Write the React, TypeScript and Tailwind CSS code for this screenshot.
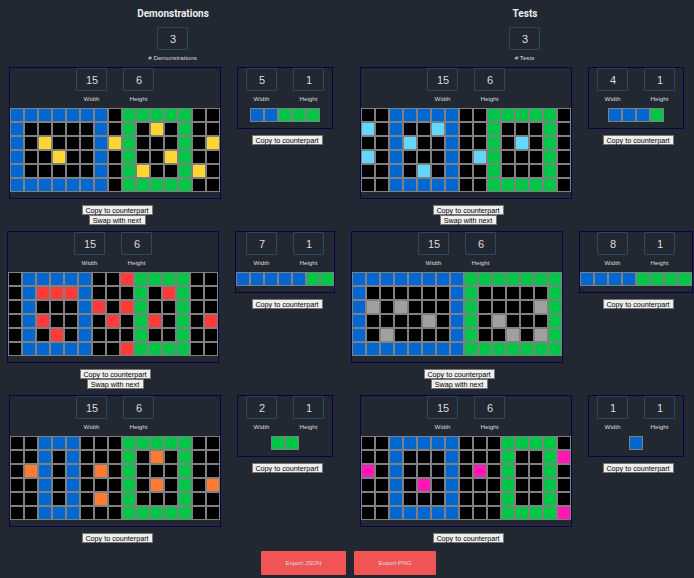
const COLORS: Record<string, string> = {
  k: "bg-black",
  b: "bg-[#0168d2]",
  g: "bg-[#00c748]",
  y: "bg-[#ffd532]",
  c: "bg-[#63d7fd]",
  r: "bg-[#ff3b39]",
  x: "bg-[#a0a0a0]",
  o: "bg-[#ff7b31]",
  p: "bg-[#ff18b4]",
};

type Pair = { input: string[]; output: string[] };

const demos: Pair[] = [
  {
    input: [
      "bbbbbbbkgggggkk",
      "bkkkkkbkgkykgkk",
      "bkykkkbygkkkgky",
      "bkkykkbkgkkygkk",
      "bkkkkkbkgykkgyk",
      "bbbbbbbkgggggkk",
    ],
    output: ["bbggg"],
  },
  {
    input: [
      "kbbbbbkkrggggkk",
      "kbrrrbkkkgkrgkk",
      "kbkkkbrkrgkkgkk",
      "kbrkkbkrkgrkgkr",
      "kbkrkbkkkgkkgkk",
      "kbbbbbkkrggggkk",
    ],
    output: ["bbbbbgg"],
  },
  {
    input: [
      "kkbbbkkkgggggkk",
      "kkbkbkkkgkokgkk",
      "kobkbkokgkkkgkk",
      "kkbkbkkkgkokgko",
      "kkbkbkokgkkkgkk",
      "kkbbbkkkgggggkk",
    ],
    output: ["gg"],
  },
];

const tests: Pair[] = [
  {
    input: [
      "kkbbbbbkkgggggk",
      "ckbkkcbkkgkkkgk",
      "kkbckkbkkgkckgk",
      "ckbkkkbkcgkkkgk",
      "kkbkckbkkgkkkgk",
      "kkbbbbbkkgggggk",
    ],
    output: ["bbbg"],
  },
  {
    input: [
      "bbbbbbbbggggggg",
      "bkkkkkkbgkkkkkg",
      "bxkxkkkbgkkkkxg",
      "bkkkkxkbgkxkkkg",
      "bkxkkkkbgkkxkxg",
      "bbbbbbbbggggggg",
    ],
    output: ["bbbbgggg"],
  },
  {
    input: [
      "kkbbbbbkkkggggk",
      "kkbkkkbkkkgkkgp",
      "pkbkkkbkpkgkkgk",
      "kkbkpkbkkkgkkgk",
      "kkbkkkbkkkgkkgk",
      "kkbbbbbkkkggggp",
    ],
    output: ["b"],
  },
];

function NumberBox({ value, label }: { value: number; label: string }) {
  return (
    <div className="flex w-[31px] flex-col items-center">
      <div className="flex h-[23px] w-[31px] items-center justify-center rounded-[1px] border border-[#30475e] pt-px pl-px font-['Liberation_Sans',sans-serif] text-[11px] leading-none text-[#dddddd]">
        {value}
      </div>
      <div className="mt-1 h-2 font-['Liberation_Sans',sans-serif] text-[6.2px] leading-2 whitespace-nowrap text-[#dddddd]">
        {label}
      </div>
    </div>
  );
}

function SmallButton({ children, wide }: { children: string; wide?: boolean }) {
  return (
    <button
      className={`${wide ? "w-[71px]" : "w-[57px]"} flex h-[10px] items-center justify-center border border-[#767676] bg-[#efefef] pt-px font-['Liberation_Sans',sans-serif] text-[7.2px] leading-none whitespace-nowrap text-black`}
    >
      {children}
    </button>
  );
}

function Panel({ rows, swap }: { rows: string[]; swap?: boolean }) {
  return (
    <div className="flex flex-col items-center">
      <div className="flex min-w-24 flex-col items-center border border-[#07024a] pb-1.5">
        <div className="flex gap-4">
          <NumberBox value={rows[0].length} label="Width" />
          <NumberBox value={rows.length} label="Height" />
        </div>
        <div className="mt-[5px]">
          {rows.map((row, y) => (
            <div key={y} className="flex">
              {row.split("").map((cell, x) => (
                <div key={x} className={`size-3.5 border border-[#808080] ${COLORS[cell]}`} />
              ))}
            </div>
          ))}
        </div>
      </div>
      <div className="mt-1.5 flex flex-col items-center pl-1">
        <SmallButton wide>Copy to counterpart</SmallButton>
        {swap && <SmallButton>Swap with next</SmallButton>}
      </div>
    </div>
  );
}

type SectionProps = { title: string; label: string; pairs: Pair[]; inset: string };

function Section({ title, label, pairs, inset }: SectionProps) {
  return (
    <>
      <div className={`flex h-[67px] flex-col items-center pt-[5px] ${inset}`}>
        <h2 className="h-[22px] pl-px font-[Roboto,sans-serif] text-[10px] leading-[17px] font-bold text-[#eeeeee]">
          {title}
        </h2>
        <NumberBox value={pairs.length} label={label} />
      </div>
      {pairs.map((pair, i) => (
        <div key={i} className="flex h-[164px] items-start justify-center gap-4">
          <Panel rows={pair.input} swap={i < pairs.length - 1} />
          <Panel rows={pair.output} />
        </div>
      ))}
    </>
  );
}

export default function App() {
  return (
    <div className="h-[578px] w-[694px] overflow-hidden bg-[#222831]">
      <div className="flex h-[551px]">
        <div className="w-[342px]">
          <Section title="Demonstrations" label="# Demonstrations" pairs={demos} inset="pl-[3px]" />
        </div>
        <div className="w-[352px] pl-2">
          <Section title="Tests" label="# Tests" pairs={tests} inset="pl-[5px]" />
        </div>
      </div>
      <div className="flex justify-center gap-2 pl-[3px] font-['Liberation_Sans',sans-serif] text-[6.2px] text-[#dddddd]">
        <button className="h-6 w-[85px] rounded-[1px] bg-[#f05454]">Export JSON</button>
        <button className="h-6 w-[82px] rounded-[1px] bg-[#f05454]">Export PNG</button>
      </div>
    </div>
  );
}
